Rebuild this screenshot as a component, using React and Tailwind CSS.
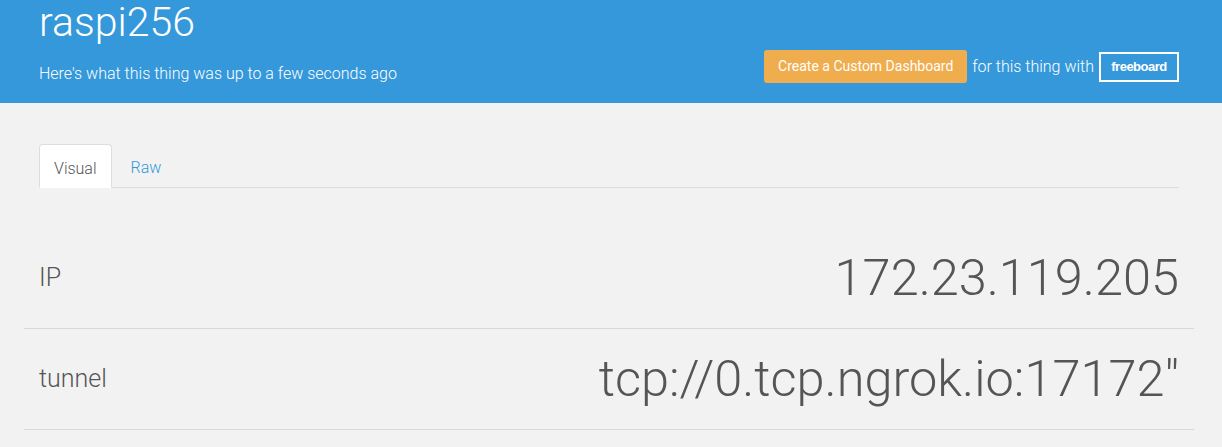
const rows = [
  { label: "IP", value: "172.23.119.205" },
  { label: "tunnel", value: 'tcp://0.tcp.ngrok.io:17172"' },
];

const App = () => {
  return (
    <div className="min-h-[447px] bg-[#f2f2f2] font-['Roboto',sans-serif] text-[#555]">
      <header className="h-[103px] bg-[#3498db] text-white">
        <div className="mx-[24px] w-[1170px] px-[15px] flex items-start justify-between">
          <div>
            <h1 className="text-[41px] font-light leading-[44px]">raspi256</h1>
            <p className="mt-[22px] text-[16px] font-light leading-none">
              Here's what this thing was up to a few seconds ago
            </p>
          </div>
          <div className="mt-[50px] flex items-center">
            <button className="h-[33px] w-[203px] rounded-[3px] bg-[#f0ad4e] text-[14px] text-white">
              Create a Custom Dashboard
            </button>
            <span className="ml-[5px] text-[16px] font-light">for this thing with</span>
            <span className="ml-[5px] flex h-[30px] w-[80px] items-center justify-center border-2 border-white font-['Liberation_Sans',sans-serif] text-[13px] font-bold tracking-[-0.5px]">
              freeboard
            </span>
          </div>
        </div>
      </header>

      <main className="mx-[24px] w-[1170px]">
        <div className="px-[15px] pt-[41px]">
          <ul className="flex border-b border-[#ddd] text-[16px] font-light">
            <li className="-mb-px h-[44px] rounded-t-[4px] border border-[#ddd] border-b-transparent bg-white px-[14px] pt-[12px]">
              Visual
            </li>
            <li className="ml-[2px] px-[17px] pt-[12px] text-[#3498db]">Raw</li>
          </ul>
        </div>
        <div className="mt-[40px]">
          {rows.map((row) => (
            <div
              key={row.label}
              className="flex h-[101px] items-center justify-between border-b border-[#d8d8d8] px-[15px]"
            >
              <span className="text-[25px] font-light">{row.label}</span>
              <span className="text-[50.5px] font-light leading-none">{row.value}</span>
            </div>
          ))}
        </div>
      </main>
    </div>
  );
};

export default App;
